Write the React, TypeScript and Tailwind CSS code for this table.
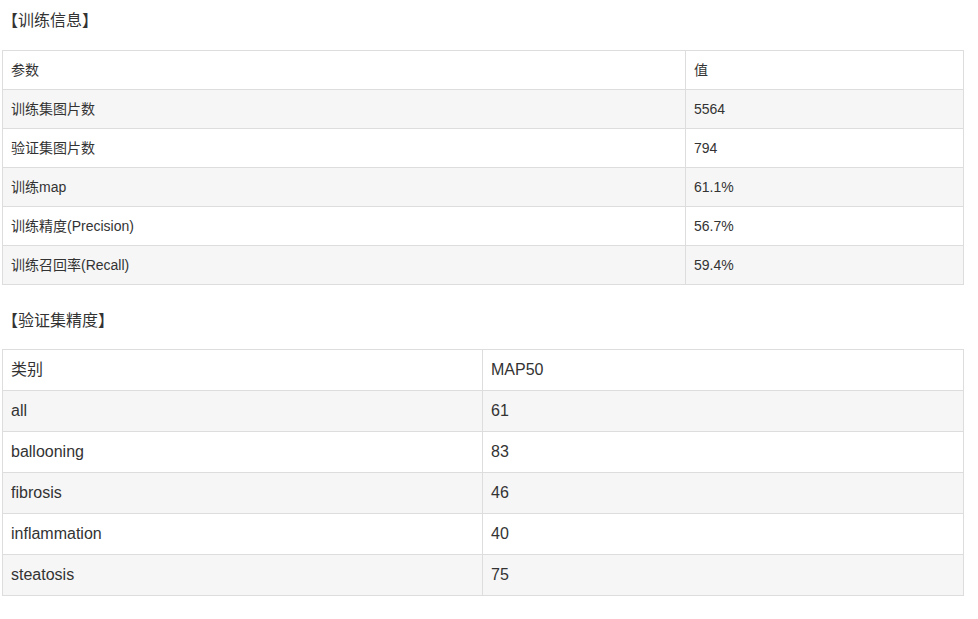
const trainRows = [
  ['参数', '值'],
  ['训练集图片数', '5564'],
  ['验证集图片数', '794'],
  ['训练map', '61.1%'],
  ['训练精度(Precision)', '56.7%'],
  ['训练召回率(Recall)', '59.4%'],
]

const valRows = [
  ['类别', 'MAP50'],
  ['all', '61'],
  ['ballooning', '83'],
  ['fibrosis', '46'],
  ['inflammation', '40'],
  ['steatosis', '75'],
]

export default function App() {
  return (
    <div
      className="min-h-screen bg-white pl-[2px] text-[#333]"
      style={{ fontFamily: '"Liberation Sans", "Noto Sans CJK SC", sans-serif' }}
    >
      <div className="mt-[9px] h-[24px] text-[16px] leading-[24px]">【训练信息】</div>
      <table className="mt-[17px] w-[962px] border-collapse text-[14px]">
        <tbody>
          {trainRows.map((row, i) => (
            <tr key={i} className={i % 2 === 1 ? 'bg-[#f6f6f6]' : 'bg-white'}>
              <td className="h-[39px] w-[683px] border border-[#dddddd] px-[8px] py-0 leading-[20px]">{row[0]}</td>
              <td className="h-[39px] border border-[#dddddd] px-[8px] py-0 leading-[20px]">{row[1]}</td>
            </tr>
          ))}
        </tbody>
      </table>
      <div className="mt-[24px] h-[24px] text-[16px] leading-[24px]">【验证集精度】</div>
      <table className="mt-[16px] w-[962px] border-collapse text-[16px]">
        <tbody>
          {valRows.map((row, i) => (
            <tr key={i} className={i % 2 === 1 ? 'bg-[#f6f6f6]' : 'bg-white'}>
              <td className="h-[41px] w-[480px] border border-[#dddddd] px-[8px] py-0 leading-[22px]">{row[0]}</td>
              <td className="h-[41px] border border-[#dddddd] px-[8px] py-0 leading-[22px]">{row[1]}</td>
            </tr>
          ))}
        </tbody>
      </table>
    </div>
  )
}
